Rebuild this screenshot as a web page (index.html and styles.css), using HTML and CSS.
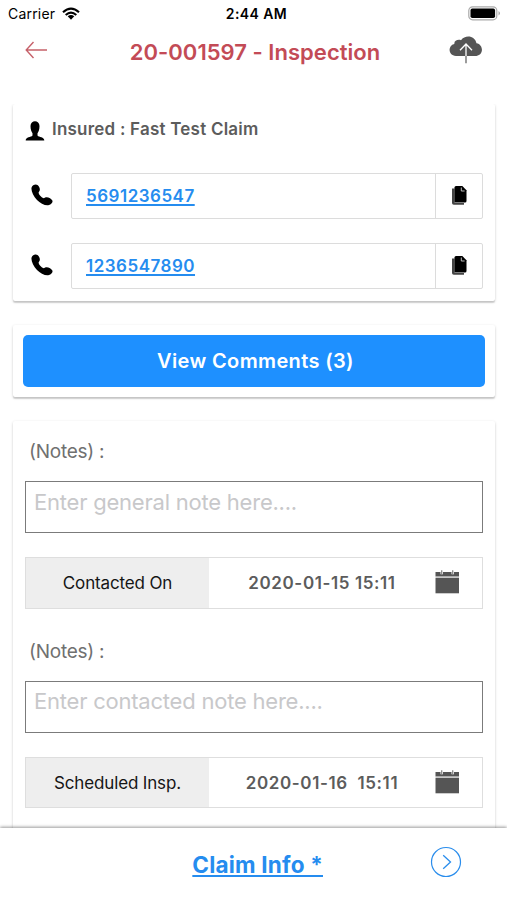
FILE: index.html
```html
<!DOCTYPE html>
<html lang="en">
<head>
<meta charset="utf-8">
<title>20-001597 - Inspection</title>
<link rel="stylesheet" href="styles.css">
</head>
<body>
<svg class="defs" aria-hidden="true">
  <symbol id="phone" viewBox="0 0 22 22"><path d="M.6 3.500C1.200 1 4.800-.3 6.500 1C9 3 9.300 6 8.300 7.300L7.500 8.700C8 11 10.500 13.500 12.800 14.300L14.200 13.500C16 12.300 20.500 14.200 21.500 16.700C21.900 18.200 20 20.500 18 21.100C14.500 22 9.300 19.500 6 16C2.200 12 -.2 6.500 .6 3.500Z"/></symbol>
  <symbol id="copy" viewBox="0 0 15 19"><path fill="#444" d="M0 2.500H2.600V17H12V18.800H1.800Q0 18.800 0 17Z"/><path d="M4 0H10.300L14.500 4.200V15Q14.500 16.500 13 16.500H2.500V1.500Q2.500 0 4 0Z"/><path d="M9.300 1.500V5H12.600" fill="none" stroke="#bbb" stroke-width="1"/></symbol>
  <symbol id="calendar" viewBox="0 0 24 24"><path d="M0 2H5V4.300H7.500V2H16V4.300H18.500V2H23.500V6.600H0Z"/><path d="M0 8H23.500V23.300H0Z"/><path d="M0 7.300H23.500" stroke="#bbb"/><path d="M6.200.3V4M17.200.3V4" stroke="#888" stroke-width="1.300"/></symbol>
</svg>
<div class="status">
  <div class="carrier"><span>Carrier</span>
    <svg width="18" height="14" viewBox="0 0 18 14"><path d="M1 5.300Q9-2 17 5.300M3.700 8Q9 3.200 14.300 8" fill="none" stroke="#000" stroke-width="2.100"/><path d="M5.700 9.300Q9 6.500 12.300 9.300L9 12.700Z"/></svg>
  </div>
  <span class="time">2:44 AM</span>
  <svg class="battery" width="33" height="15" viewBox="0 0 33 15"><rect x=".8" y=".8" width="28" height="13" rx="3.800" fill="#fff" stroke="#aaa" stroke-width="1.200"/><rect x="2.500" y="2.600" width="24.600" height="9.400" rx="1.800"/><path d="M30.500 5V9.500Q32 8.500 32 7.250Q32 6 30.500 5Z" fill="#aaa"/></svg>
</div>
<header class="nav">
  <svg class="back" width="23" height="18" viewBox="0 0 23 18"><path d="M8.500 1L1.200 9L8.500 17M1.200 9H22" fill="none" stroke="#c6616a" stroke-width="1.400"/></svg>
  <h1>20-001597 - Inspection</h1>
  <svg class="cloud" width="34" height="28" viewBox="0 0 34 28"><path fill="#555" d="M7 20C-1 19.500-1.500 9.500 5.300 8C5 4.500 9 3.200 12 4.200C16-1.500 26-.8 27.500 7.300C34.500 8.500 35 19 27.500 20Z"/><path d="M17 28V8.500M11 14.300L17 8L23 14.300" fill="none" stroke="#fff" stroke-width="1.300"/><path d="M17 20V27.300" stroke="#666" stroke-width="1.300"/></svg>
</header>
<main>
  <section class="card insured">
    <div class="person">
      <svg width="20" height="20" viewBox="0 0 20 20"><path d="M5.500 5C5.500-1.300 14.500-1.300 14.500 5C14.500 8.500 13.500 11 12.500 12.300V14.500C14 16.500 19.300 15.800 19.300 19.500H.7C.7 15.800 6 16.500 7.500 14.500V12.300C6.500 11 5.500 8.500 5.500 5Z"/></svg>
      <h2>Insured : Fast Test Claim</h2>
    </div>
    <div class="contact"><svg class="phone"><use href="#phone"/></svg><div class="field"><a>5691236547</a><span class="copy"><svg width="15" height="19"><use href="#copy"/></svg></span></div></div>
    <div class="contact"><svg class="phone"><use href="#phone"/></svg><div class="field"><a>1236547890</a><span class="copy"><svg width="15" height="19"><use href="#copy"/></svg></span></div></div>
  </section>
  <section class="card comments"><div class="button"><span>View Comments (3)</span></div></section>
  <section class="card notes">
    <div class="label"><span>(Notes) :</span></div>
    <div class="note"><span>Enter general note here....</span></div>
    <div class="date"><div class="name"><span>Contacted On</span></div><div class="value"><span>2020-01-15 15:11</span></div><svg class="cal"><use href="#calendar"/></svg></div>
    <div class="label second"><span>(Notes) :</span></div>
    <div class="note contacted"><span>Enter contacted note here....</span></div>
    <div class="date scheduled"><div class="name"><span>Scheduled Insp.</span></div><div class="value"><span>2020-01-16&nbsp; 15:11</span></div><svg class="cal"><use href="#calendar"/></svg></div>
  </section>
</main>
<footer>
  <a>Claim Info *</a>
  <svg width="32" height="32" viewBox="0 0 32 32"><circle cx="16" cy="16" r="14.500" fill="none" stroke="#2a8dec" stroke-width="1.200"/><path d="M13.200 9.200L20.500 16L13.200 22.800" fill="none" stroke="#2a8dec" stroke-width="1.300"/></svg>
</footer>
</body>
</html>
```
FILE: styles.css
```css
* { box-sizing: border-box; }
body { margin: 0; height: 900px; display: flex; flex-direction: column; overflow: hidden; background: #fff; color: #000; font-family: Inter, "Liberation Sans", sans-serif; white-space: nowrap; }
svg { display: block; flex: none; }
.defs { display: none; }
h1, h2 { margin: 0; font-weight: 600; }
.status { height: 27px; flex: none; display: grid; grid-template-columns: 1fr auto 1fr; align-items: center; padding: 0 6px 0 8px; font-size: 14px; }
.carrier { display: flex; align-items: center; gap: 7px; letter-spacing: .2px; }
.time { font-weight: 600; letter-spacing: .4px; margin-left: 4px; }
.battery { justify-self: end; }
.nav { height: 77px; flex: none; display: flex; justify-content: space-between; align-items: flex-start; padding: 9px 24px 0 25px; }
.back { margin-top: 5px; }
.nav h1 { font-size: 22px; line-height: 32px; color: #c34b56; letter-spacing: .03px; margin-left: 13px; }
main { flex: 1; min-height: 0; overflow: hidden; padding: 0 12px 0 13px; }
.card { background: #fff; border-radius: 2px; box-shadow: 0 1px 3px rgba(0,0,0,.18), 0 2px 1px rgba(0,0,0,.12); margin-bottom: 24px; }
.insured { height: 197px; padding: 12px 12px 0; }
.person { display: flex; align-items: center; height: 26px; gap: 7px; }
.person svg { margin-top: 3px; }
.person h2 { font-size: 17px; color: #5c5c5c; letter-spacing: .22px; }
.contact { display: flex; align-items: center; padding-left: 6px; gap: 18px; margin-top: 31px; }
.contact + .contact { margin-top: 24px; }
.phone { width: 22px; height: 22px; margin-top: -2px; }
.field { flex: 1; display: flex; height: 46px; border: 1px solid #dcdcdc; border-radius: 2px; }
.field a { flex: none; margin: 0 auto 0 14px; line-height: 44px; font-size: 17px; font-weight: 600; letter-spacing: .5px; }
.field a, footer a { color: #258cef; text-decoration: underline; text-decoration-thickness: 1.5px; text-underline-offset: 2px; text-decoration-skip-ink: none; }
.copy { width: 47px; padding-bottom: 2px; display: flex; align-items: center; justify-content: center; border-left: 1px solid #dcdcdc; }
.comments { height: 72px; padding: 10px; }
.button { height: 52px; border-radius: 5px; background: #1e90ff; color: #fff; display: flex; align-items: center; justify-content: center; font-size: 20px; font-weight: 600; letter-spacing: .36px; padding-left: 3px; }
.notes { height: 500px; padding: 18px 12px 0; }
.label { height: 26px; padding-left: 4px; line-height: 26px; font-size: 19px; letter-spacing: -.25px; color: #707070; }
.note { height: 52px; margin-top: 16px; padding: 6px 8px; border: 1.5px solid #7b7b7b; line-height: 28px; font-size: 22px; letter-spacing: -.22px; color: #c8c8ca; }
.note.contacted { padding-top: 5px; }
.date { height: 52px; margin-top: 24px; display: flex; align-items: center; border: 1px solid #dedede; padding-right: 22px; }
.date.scheduled { height: 51px; }
.name { width: 183px; height: 100%; display: flex; align-items: center; justify-content: center; background: #eee; font-size: 17px; letter-spacing: -.15px; color: #151515; }
.value { flex: 1; display: flex; justify-content: center; font-size: 17px; font-weight: 600; letter-spacing: .6px; color: #5c5c5c; }
.cal { width: 25px; height: 24px; fill: #555; margin-top: -2px; }
.second { margin-top: 30px; }
footer { position: relative; height: 72px; flex: none; background: #fff; box-shadow: 0 -1px 3px rgba(0,0,0,.4); display: flex; justify-content: flex-end; align-items: center; padding-right: 45px; gap: 107px; }
footer a { font-size: 22.5px; font-weight: 700; letter-spacing: .2px; }
footer svg { margin-top: -4px; }
```
